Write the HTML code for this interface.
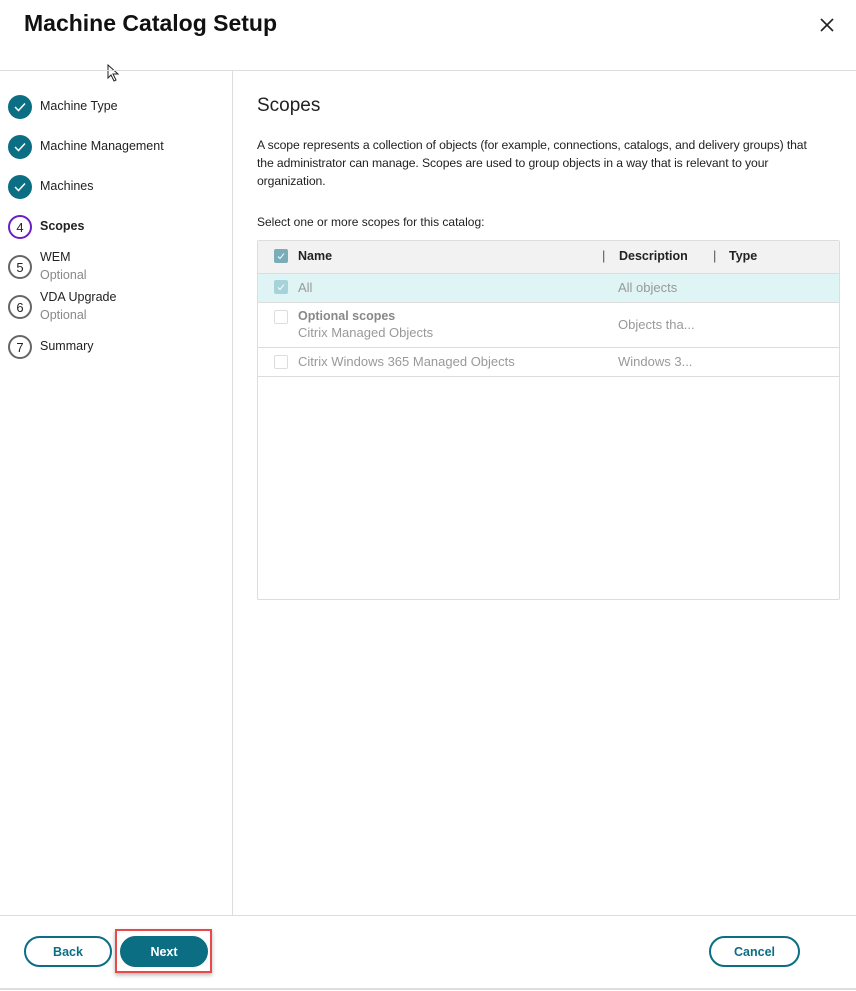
<!DOCTYPE html>
<html><head><style>
body{margin:0;width:856px;height:991px;background:#fff;font-family:"Liberation Sans",sans-serif;color:#222;position:relative;overflow:hidden;font-size:13px}
.a{position:absolute}
.step{position:absolute;left:8px;display:flex;align-items:center}
.c{width:24px;height:24px;border-radius:50%;box-sizing:border-box;display:flex;align-items:center;justify-content:center;font-size:13px}
.done{background:#0b6e83}
.num{border:2px solid #666;color:#222}
.lbl{position:absolute;left:40px;font-size:12.5px;color:#222}
.opt{color:#888}
.cb{position:absolute;width:14px;height:14px;border:1px solid #ddd;border-radius:2px;box-sizing:border-box;background:#fff}
.btn{position:absolute;top:936px;height:31px;border-radius:16px;box-sizing:border-box;border:2px solid #0b6e83;color:#0b6e83;font-weight:bold;font-size:12.5px;display:flex;align-items:center;justify-content:center}
.g{color:#999}
</style></head><body>
<div class="a" style="left:24px;top:10px;font-size:23px;font-weight:bold;color:#111">Machine Catalog Setup</div>
<svg class="a" style="left:819px;top:17px" width="16" height="16"><path d="M2 2L14 14M14 2L2 14" stroke="#222" stroke-width="1.6"/></svg>
<svg class="a" style="left:107px;top:64px" width="14" height="18"><path d="M1 1L1 14L4 11L7 17L9 16L6 10L11 10Z" fill="#fff" stroke="#222" stroke-width="1"/></svg>
<div class="a" style="left:0;top:70px;width:856px;height:1px;background:#ddd"></div>
<div class="a" style="left:232px;top:71px;width:1px;height:844px;background:#ddd"></div>
<div class="a" style="left:0;top:915px;width:856px;height:1px;background:#ddd"></div>
<div class="a" style="left:0;top:988px;width:856px;height:2px;background:#ddd"></div>

<div class="step" style="top:95px"><div class="c done"><svg width="12" height="10"><path d="M1 5L4.5 8.5L11 1.5" stroke="#fff" stroke-width="1.5" fill="none"/></svg></div></div>
<div class="lbl" style="top:99px">Machine Type</div>
<div class="step" style="top:135px"><div class="c done"><svg width="12" height="10"><path d="M1 5L4.5 8.5L11 1.5" stroke="#fff" stroke-width="1.5" fill="none"/></svg></div></div>
<div class="lbl" style="top:139px">Machine Management</div>
<div class="step" style="top:175px"><div class="c done"><svg width="12" height="10"><path d="M1 5L4.5 8.5L11 1.5" stroke="#fff" stroke-width="1.5" fill="none"/></svg></div></div>
<div class="lbl" style="top:179px">Machines</div>
<div class="step" style="top:215px"><div class="c num" style="border-color:#6a1fc2">4</div></div>
<div class="lbl" style="top:219px;font-weight:bold">Scopes</div>
<div class="step" style="top:255px"><div class="c num">5</div></div>
<div class="lbl" style="top:250px">WEM</div><div class="lbl opt" style="top:268px">Optional</div>
<div class="step" style="top:295px"><div class="c num">6</div></div>
<div class="lbl" style="top:290px">VDA Upgrade</div><div class="lbl opt" style="top:308px">Optional</div>
<div class="step" style="top:335px"><div class="c num">7</div></div>
<div class="lbl" style="top:339px">Summary</div>

<div class="a" style="left:257px;top:95px;font-size:19px;color:#222">Scopes</div>
<div class="a" style="left:257px;top:136px;font-size:12.2px;line-height:18px;white-space:nowrap;letter-spacing:-0.1px">A scope represents a collection of objects (for example, connections, catalogs, and delivery groups) that<br>the administrator can manage. Scopes are used to group objects in a way that is relevant to your<br>organization.</div>
<div class="a" style="left:257px;top:215px;font-size:12px">Select one or more scopes for this catalog:</div>

<div class="a" style="left:257px;top:240px;width:581px;height:358px;border:1px solid #ddd;border-radius:2px"></div>
<div class="a" style="left:258px;top:241px;width:581px;height:32px;background:#f2f2f2;border-bottom:1px solid #ddd"></div>
<div class="cb" style="left:274px;top:249px;background:#7aadb8;border-color:#7aadb8"><svg width="12" height="12" style="position:absolute;left:0;top:0"><path d="M3 6.5L5 8.5L9 3.5" stroke="#fff" stroke-width="1" fill="none"/></svg></div>
<div class="a" style="left:298px;top:249px;font-weight:bold;font-size:12.5px">Name</div>
<div class="a" style="left:602px;top:248px;color:#555">|</div>
<div class="a" style="left:619px;top:249px;font-weight:bold;font-size:12.5px">Description</div>
<div class="a" style="left:713px;top:248px;color:#555">|</div>
<div class="a" style="left:729px;top:249px;font-weight:bold;font-size:12.5px">Type</div>

<div class="a" style="left:258px;top:274px;width:581px;height:28px;background:#dff4f4;border-bottom:1px solid #ddd"></div>
<div class="cb" style="left:274px;top:280px;background:#a6d3d9;border-color:#a6d3d9"><svg width="12" height="12" style="position:absolute;left:0;top:0"><path d="M3 6.5L5 8.5L9 3.5" stroke="#fff" stroke-width="1" fill="none"/></svg></div>
<div class="a g" style="left:298px;top:280px">All</div>
<div class="a g" style="left:618px;top:280px">All objects</div>

<div class="a" style="left:258px;top:347px;width:581px;height:1px;background:#ddd"></div>
<div class="cb" style="left:274px;top:310px"></div>
<div class="a" style="left:298px;top:309px;color:#888;font-weight:bold;font-size:12.5px">Optional scopes</div>
<div class="a g" style="left:298px;top:325px">Citrix Managed Objects</div>
<div class="a g" style="left:618px;top:317px">Objects tha...</div>

<div class="a" style="left:258px;top:376px;width:581px;height:1px;background:#ddd"></div>
<div class="cb" style="left:274px;top:355px"></div>
<div class="a g" style="left:298px;top:354px">Citrix Windows 365 Managed Objects</div>
<div class="a g" style="left:618px;top:354px">Windows 3...</div>

<div class="btn" style="left:24px;width:88px">Back</div>
<div class="a" style="left:115px;top:929px;width:97px;height:44px;border:2px solid #e84a4a;box-sizing:border-box;box-shadow:0 2px 4px rgba(0,0,0,.3)"></div>
<div class="btn" style="left:120px;width:88px;background:#0b6e83;color:#fff">Next</div>
<div class="btn" style="left:709px;width:91px">Cancel</div>
</body></html>
